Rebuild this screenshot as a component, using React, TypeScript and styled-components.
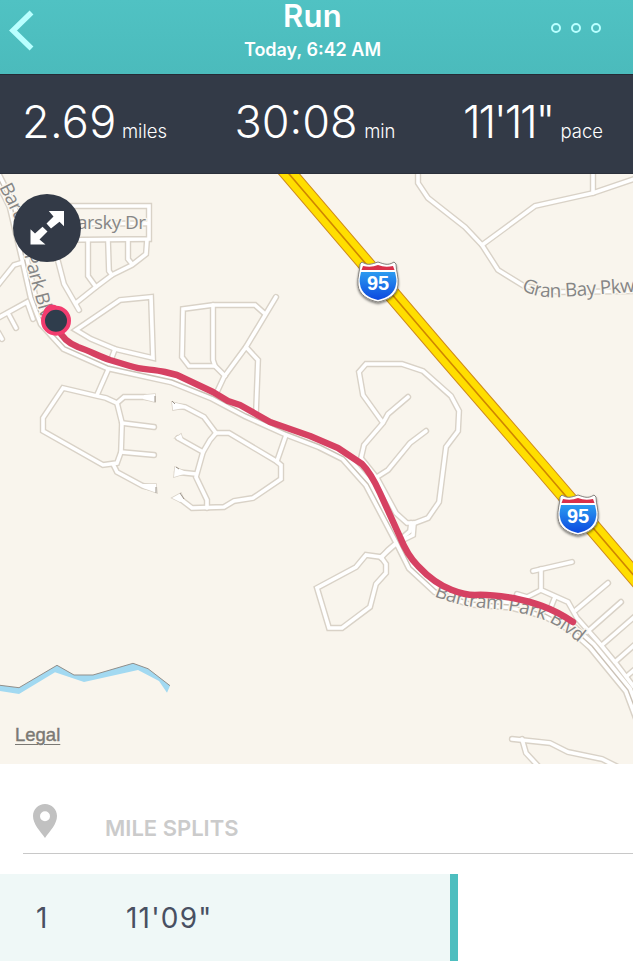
import styled, { createGlobalStyle } from "styled-components";

const stats = [
  { value: "2.69", unit: "miles", width: 145, spacing: 0.3 },
  { value: "30:08", unit: "min", width: 161, spacing: 0 },
  { value: "11'11\"", unit: "pace", width: 140, spacing: -2.3 },
];

const splits = [{ mile: 1, time: "11'09\"", bar: 458 }];

const roads = [
  "M60 206H149V239L60 240",
  "M60 223.500H148",
  "M88 241V276L96 287",
  "M108 241L109 271L112 275",
  "M128 241V259L132 264",
  "M147 240L146 254L132 265L112 275L96 287L76 303",
  "M58 261L64 284L79 310",
  "M27 261L14 265L-2 285",
  "M-2 318L27 302L33 319",
  "M8 313L16 328",
  "M-2 332L2 339",
  "M76 330L120 300L151 297L153 358L115 349L91 339Z",
  "M115 349L112 357",
  "M225 376L215 366H189L182 357L183 309L213 305H255L264 313",
  "M213 305V360L215 366",
  "M276 297L246 347L224 377L217 392",
  "M246 347L258 360L256 412",
  "M176 406L185 407L204 417L216 433H229L276 461L281 465V479L253 498L234 501L224 507L192 508L179 498",
  "M216 433L210 440L203 452L196 477L207 500V508",
  "M203 452L178 438",
  "M196 474L177 472",
  "M286 435L277 461",
  "M108 370L97 395",
  "M63 388L97 396L106 398L117 403L122 423L121 452L117 463L103 465L43 431V418Z",
  "M117 403L124 397H145L152 398",
  "M122 423L154 427",
  "M121 452L154 455",
  "M113 464L117 472L143 486L153 488",
  "M418 172V183L428 198L465 227L482 245L498 270L524 286L560 292L640 291",
  "M482 245L535 206L593 193L640 177",
  "M593 172V193",
  "M383 423L363 395L359 372L366 364H402L423 371L451 396L459 411L458 431L446 447L439 502L428 518L415 523H407L396 513L377 478L361 458L364 445L383 423L388 414L408 397",
  "M377 477L388 470L410 443L426 431",
  "M414 523L413 535L397 543",
  "M411 523L410 531L388 550L381 558",
  "M381 557L366 555L356 567L317 588L329 628H342L370 607L376 584L386 573V564L381 557L397 543",
  "M533 571L572 562",
  "M541 569V590L568 602L577 618L601 645L615 662L640 695",
  "M541 590L527 597L517 594",
  "M555 597L551 607",
  "M576 610L608 583",
  "M587 632L621 602",
  "M602 645L640 612",
  "M615 662L640 640",
  "M627 676L640 665",
  "M512 739L550 743L568 752L602 759L620 768",
  "M522 739L526 753L540 768",
];

const stubs = [
  "M172 402L173 410L184 408V405Z",
  "M175 438L181 434L183 440Z",
  "M175 467L174 477L184 474V471Z",
  "M172 498L181 493L184 500L180 502Z",
  "M144 395L155 394V402L143 399Z",
  "M143 484L156 484L157 493L143 488Z",
];

// dark slivers where the cul-de-sacs are clipped
const stubEdges = "M155 396V402M156 487V493M172 401L175 404M176 467L179 469M180 493L184 499";

const mainRoad =
  "M-6 170L12 206L24 257L33 297L43 323L65 347L108 366L172 380L212 396L246 414L286 432L320 445L344 457L368 484L398 541L411 567L436 590L470 602L510 605L545 614L573 629L592 646L628 690L640 722";

const route =
  "M58 328C62 338 68 343 78 347C90 351 98 356 110 360L130 366C142 370 152 369 165 372L177 375L213 392L228 401L240 405L270 422L290 429L310 436L338 448L362 464C368 470 375 482 380 493L400 537C406 552 412 560 418 566C430 579 441 586 452 590C462 594 468 595 475 595C488 594 500 596 513 598C532 602 551 607 573 622";

const Shield = ({ x, y }: { x: number; y: number }) => (
  <g transform={`translate(${x} ${y})`}>
    <path
      d="M-16 -20C-10 -16 -6 -18 0 -20C6 -18 10 -16 16 -20L18 -18C18 -11 21 -5 20 3C19 13 10 18 0 20C-10 18 -19 13 -20 3C-21 -5 -18 -11 -18 -18Z"
      fill="#fff"
      stroke="#85827d"
      strokeWidth="1"
      filter="url(#shadow)"
    />
    <path d="M-16.500 -12L-15 -16Q-7 -14 0 -17Q7 -14 15 -16L16.500 -12Z" fill="#d9304a" />
    <path
      d="M-17 -10H17C18 -5 19 -2 18 2C17 11 9 16 0 18C-9 16 -17 11 -18 2C-19 -2 -18 -5 -17 -10Z"
      fill="url(#shieldBlue)"
    />
    <ShieldText x="0" y="8">95</ShieldText>
  </g>
);

const RouteMap = () => (
  <SMap viewBox="0 174 633 590">
    <defs>
      <linearGradient id="shieldBlue" x1="0" y1="0" x2="0" y2="1">
        <stop offset="0" stopColor="#2c9bf0" />
        <stop offset="1" stopColor="#0c48df" />
      </linearGradient>
      <filter id="shadow" x="-30%" y="-30%" width="160%" height="160%">
        <feDropShadow dx="0" dy="1.500" stdDeviation="1" floodOpacity="0.5" />
      </filter>
      <path id="parkWest" d="M-1 187L14 217L22 245L28 270L41 318L58 360" />
      <path id="parkEast" d="M434 596C455 605 475 608 495 609C515 611 530 615 545 620C558 626 566 632 590 652" />
      <path id="granBay" d="M521 289C534 297 545 298 562 297L660 290" />
    </defs>

    <path
      d="M0 685.300L19 687.700L57 665.300L74 675H93L133 663.300L148 668.700L170 685.700L167 692.700L159 681L138 670L84 682L55 672.300L19 694L0 691Z"
      fill="#a2d9f1"
    />
    <path
      d="M0 685.300L19 687.700L57 665.300L74 675H93L133 663.300L148 668.700L170 685.700"
      fill="none"
      stroke="#918f8b"
      strokeWidth="1"
    />

    {/* roads: casing first, then the white fill */}
    <g fill="none" stroke="#d9d2c7" strokeLinecap="round" strokeLinejoin="miter">
      <path d={mainRoad} strokeWidth="11.500" />
      {roads.map((d) => (
        <path key={d} d={d} strokeWidth="6.400" />
      ))}
      {stubs.map((d) => (
        <path key={d} d={d} strokeWidth="1.500" />
      ))}
    </g>
    <g fill="none" stroke="#fff" strokeLinecap="round" strokeLinejoin="miter">
      <path d={mainRoad} strokeWidth="8.500" />
      {roads.map((d) => (
        <path key={d} d={d} strokeWidth="3.600" />
      ))}
      {stubs.map((d) => (
        <path key={d} d={d} fill="#fff" stroke="none" />
      ))}
    </g>
    <path d={mainRoad} fill="none" stroke="#cbc2b6" strokeWidth="1.400" />
    <path d={stubEdges} fill="none" stroke="#8e867b" strokeWidth="0.900" />

    <g fill="none">
      <path d="M272 154L443 354L543.500 470L660 606" stroke="#cf8a1c" strokeWidth="17" />
      <path d="M272 154L443 354L543.500 470L660 606" stroke="#ffde00" strokeWidth="15" />
      <path d="M272 154L443 354L543.500 470L660 606" stroke="#cf8600" strokeWidth="1.600" />
    </g>

    <MapLabel>
      <textPath href="#parkWest" textLength="150">Bartram Park Blvd</textPath>
    </MapLabel>
    <MapLabel x="77" y="228.500" textLength="69">arsky Dr</MapLabel>
    <MapLabel>
      <textPath href="#granBay" textLength="125">Gran Bay Pkwy</textPath>
    </MapLabel>
    <MapLabel>
      <textPath href="#parkEast" textLength="155">Bartram Park Blvd</textPath>
    </MapLabel>

    <path d={route} fill="none" stroke="#d64162" strokeWidth="6.500" strokeLinecap="round" strokeLinejoin="round" />
    <circle cx="52" cy="313" r="8.500" fill="#f23c6e" />
    <circle cx="56" cy="320.700" r="13" fill="#2f3d4c" stroke="#f23c6e" strokeWidth="4" />

    <Shield x={378} y={282} />
    <Shield x={578} y={515} />
  </SMap>
);

export default function App() {
  return (
    <>
      <GlobalStyle />
      <SScreen>
        <SHeader>
          <SIconButton aria-label="Back">
            <svg width="26" height="42" viewBox="0 0 26 42">
              <path d="M23.500 2.500L5 20.500L23.500 38.500" fill="none" stroke="#b9ffff" strokeWidth="5.500" />
            </svg>
          </SIconButton>
          <STitles>
            <STitle>Run</STitle>
            <SDate>Today, 6:42 AM</SDate>
          </STitles>
          <SDots aria-label="More">
            <SDot />
            <SDot />
            <SDot />
          </SDots>
        </SHeader>

        <SStats>
          {stats.map((stat) => (
            <SStat key={stat.unit} $width={stat.width}>
              <SValue $spacing={stat.spacing}>{stat.value}</SValue>
              <SUnit>{stat.unit}</SUnit>
            </SStat>
          ))}
        </SStats>

        <SMapArea>
          <RouteMap />
          <SExpand aria-label="Expand map">
            <svg width="34" height="34" viewBox="0 0 34 34" fill="#fff">
              <path d="M18.800 0H34V15.200L29.500 10.800L21 17.500L16.500 12.500L23.500 5.500Z" />
              <path d="M0.500 33.500V18.200L5 22.500L12.500 15.800L17.500 20.500L9.500 28.500L15.500 33.500Z" />
            </svg>
          </SExpand>
          <SLegal>Legal</SLegal>
        </SMapArea>

        <SSplitsHeader>
          <svg width="24" height="34" viewBox="0 0 24 34">
            <path
              d="M12 0C5.400 0 0 5.200 0 12C0 20 7 27 12 34C17 27 24 20 24 12C24 5.200 18.600 0 12 0ZM12 7.200A5 5 0 1 1 12 17.200A5 5 0 1 1 12 7.200Z"
              fill="#c1c1c1"
              fillRule="evenodd"
            />
          </svg>
          <SSplitsTitle>MILE SPLITS</SSplitsTitle>
        </SSplitsHeader>
        {splits.map((split) => (
          <SSplit key={split.mile} style={{ width: split.bar }}>
            <SMile>{split.mile}</SMile>
            <STime>{split.time}</STime>
          </SSplit>
        ))}
      </SScreen>
    </>
  );
}

const GlobalStyle = createGlobalStyle`
  * {
    box-sizing: border-box;
  }
  body {
    margin: 0;
    background: #fff;
    font-family: Inter, "Open Sans", sans-serif;
  }
  button {
    border: 0;
    padding: 0;
    background: none;
    font: inherit;
  }
  svg {
    display: block;
  }
`;

const SScreen = styled.div`
  display: flex;
  flex-direction: column;
  width: 633px;
  height: 961px;
  overflow: hidden;
`;

const SHeader = styled.header`
  display: flex;
  justify-content: space-between;
  flex: none;
  height: 75px;
  padding: 0 32px 0 8px;
  background: linear-gradient(#50c2c3, #4bbbbc);
  border-bottom: 1px solid #252b35;
`;

const SIconButton = styled.button`
  width: 66px;
  height: 42px;
  margin-top: 10px;
`;

const STitles = styled.div`
  text-align: center;
  color: #fff;
`;

const STitle = styled.h1`
  margin: 0;
  font-size: 31px;
  line-height: 32px;
  font-weight: 600;
  letter-spacing: 0.3px;
`;

const SDate = styled.p`
  margin: 7px 0 0;
  font-size: 18px;
  line-height: 22px;
  font-weight: 600;
`;

const SDots = styled.button`
  display: flex;
  gap: 10px;
  height: 10px;
  margin-top: 23px;
`;

const SDot = styled.span`
  width: 10px;
  height: 10px;
  border: 2px solid #b9ffff;
  border-radius: 50%;
`;

const SStats = styled.section`
  display: flex;
  justify-content: space-between;
  flex: none;
  height: 99px;
  padding: 19px 30px 0 22px;
  background: #333a47;
  border-bottom: 1px solid #2b303b;
  color: #fff;
`;

const SStat = styled.div<{ $width: number }>`
  display: flex;
  justify-content: space-between;
  align-items: baseline;
  width: ${(p) => p.$width}px;
  height: 56px;
  white-space: nowrap;
`;

const SValue = styled.span<{ $spacing: number }>`
  font-size: 45px;
  line-height: 56px;
  font-weight: 350;
  letter-spacing: ${(p) => p.$spacing}px;
`;

const SUnit = styled.span`
  font-size: 18.5px;
  font-weight: 350;
`;

const SMapArea = styled.section`
  position: relative;
  flex: none;
  height: 590px;
  background: #f9f5ed;
`;

const SMap = styled.svg`
  width: 633px;
  height: 590px;
`;

const MapLabel = styled.text`
  font-family: "Open Sans", "Noto Sans", sans-serif;
  font-size: 19px;
  font-weight: 500;
  fill: #868686;
  stroke: #f9f5ed;
  stroke-width: 3px;
  stroke-linejoin: round;
  paint-order: stroke;
`;

const ShieldText = styled.text`
  font-family: "Liberation Sans", sans-serif;
  font-size: 20px;
  font-weight: 700;
  fill: #fff;
  text-anchor: middle;
`;

const SExpand = styled.button`
  position: absolute;
  left: 13px;
  top: 20px;
  display: grid;
  place-items: center;
  width: 68px;
  height: 68px;
  border-radius: 50%;
  background: #333a47;
`;

const SLegal = styled.a`
  position: absolute;
  left: 15px;
  top: 550px;
  font-family: "Liberation Sans", sans-serif;
  font-size: 18.5px;
  line-height: 22px;
  color: #7b7974;
  -webkit-text-stroke: 0.4px #7b7974;
  text-decoration: underline;
  text-decoration-thickness: 1px;
  text-underline-offset: 3px;
`;

const SSplitsHeader = styled.div`
  display: flex;
  flex: none;
  gap: 48px;
  height: 90px;
  margin: 0 0 20px 23px;
  padding: 40px 0 0 10px;
  border-bottom: 1px solid #c8c8c8;
`;

const SSplitsTitle = styled.h2`
  margin: 10px 0 0;
  font-size: 22px;
  line-height: 28px;
  font-weight: 600;
  color: #cbcbcb;
`;

const SSplit = styled.div`
  display: flex;
  align-items: center;
  flex: none;
  height: 87px;
  padding-left: 36px;
  background: #eff8f7;
  border-right: 8px solid #4dbebf;
  color: #485062;
  font-size: 28px;
`;

const SMile = styled.span`
  width: 90px;
`;

const STime = styled.span`
  letter-spacing: 1.2px;
`;
